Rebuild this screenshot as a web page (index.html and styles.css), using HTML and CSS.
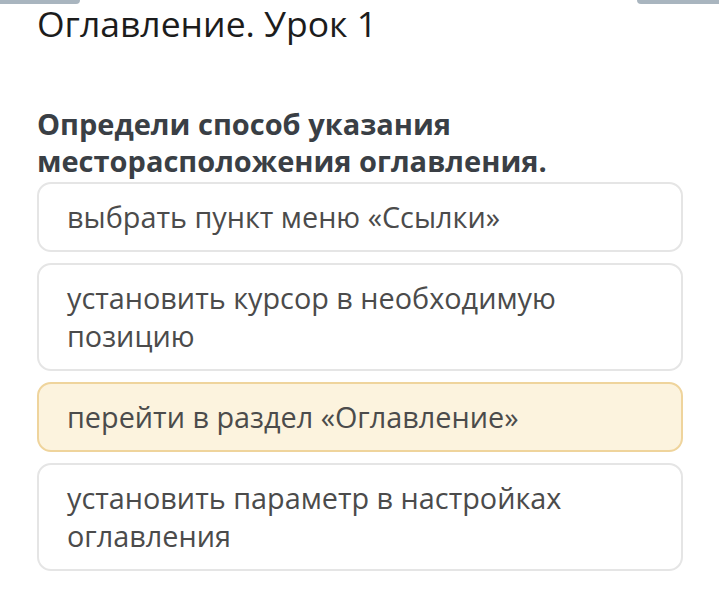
FILE: index.html
```html
<!DOCTYPE html>
<html lang="ru">
<head>
<meta charset="utf-8">
<link rel="stylesheet" href="styles.css">
</head>
<body>
<div class="topbar">
  <div class="tab tab-left"></div>
  <div class="tab tab-right"></div>
</div>
<main class="page">
  <h1 class="title">Оглавление. Урок 1</h1>
  <h2 class="question">Определи способ указания месторасположения оглавления.</h2>
  <div class="options">
    <div class="option">выбрать пункт меню «Ссылки»</div>
    <div class="option">установить курсор в необходимую позицию</div>
    <div class="option selected">перейти в раздел «Оглавление»</div>
    <div class="option">установить параметр в настройках оглавления</div>
  </div>
</main>
</body>
</html>
```
FILE: styles.css
```css
* { box-sizing: border-box; }
html, body { margin: 0; padding: 0; background: #ffffff; }
body { font-family: "Open Sans", "Noto Sans", sans-serif; width: 719px; height: 610px; overflow: hidden; }
.topbar { display: flex; justify-content: space-between; height: 4px; }
.tab { height: 4px; background: #a9b5bf; }
.tab-left { width: 80px; border-bottom-right-radius: 6px; }
.tab-right { width: 82px; border-bottom-left-radius: 6px; }
.page { padding: 0 36px 0 37px; }
.title {
  margin: 0;
  font-size: 35.5px;
  line-height: 38px;
  font-weight: 400;
  color: #1c1c1c;
}
.question {
  margin: 63px 0 3px 0;
  font-size: 29px;
  line-height: 37px;
  font-weight: 700;
  color: #3a3f45;
  width: 580px;
}
.options { display: flex; flex-direction: column; gap: 11px; }
.option {
  border: 2px solid #e5e5e5;
  border-radius: 14px;
  padding: 14px 28px;
  font-size: 28.8px;
  line-height: 38px;
  color: #4b4b4b;
  background: #ffffff;
}
.option:nth-child(2), .option:nth-child(4) { padding-right: 90px; }
.option.selected { background: #fcf3de; border-color: #efd49c; }
```
